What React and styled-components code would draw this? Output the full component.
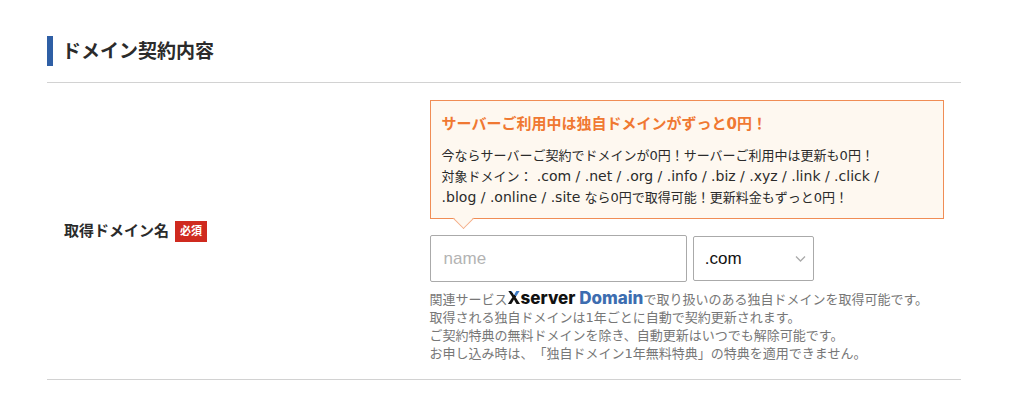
import styled, { createGlobalStyle } from "styled-components";

const GlobalStyle = createGlobalStyle`
    * {
        box-sizing: border-box;
    }

    body {
        margin: 0;
        background: #fff;
        color: #2b2b2b;
        font-family: "DejaVu Sans", "Noto Sans CJK JP", sans-serif;
        text-spacing-trim: space-all;
    }
`;

const Wrapper = styled.main`
    padding: 36px 63px 20px 47px;
`;

const SectionTitle = styled.h2`
    margin: 0 0 16px;
    padding-left: 9px;
    border-left: 6px solid #2f5fa5;
    font-size: 19px;
    font-weight: 700;
    line-height: 30px;
`;

const FormRow = styled.div`
    display: grid;
    grid-template-columns: 40% 1fr;
    align-items: center;
    border-top: 1px solid #d2d2d2;
    border-bottom: 1px solid #d2d2d2;
`;

const LabelCell = styled.div`
    display: flex;
    align-items: center;
    gap: 6px;
    padding: 17px;
`;

const FieldLabel = styled.label`
    font-size: 15px;
    font-weight: 700;
    line-height: 22px;
`;

const Required = styled.span`
    padding: 0 5px;
    background: #cf2a1f;
    color: #fff;
    font-size: 11px;
    font-weight: 700;
    line-height: 21px;
`;

const FieldCell = styled.div`
    padding: 17px 17px 16px;
`;

const Callout = styled.div`
    position: relative;
    margin-bottom: 16px;
    padding: 12px 11px 10px;
    border: 1px solid #f08d55;
    background: #fef8f0;

    &::after {
        content: "";
        position: absolute;
        bottom: -8px;
        left: 25px;
        width: 14px;
        height: 14px;
        border: solid #f4ae87;
        border-width: 0 1px 1px 0;
        background: linear-gradient(135deg, transparent 50%, #fef8f0 50%);
        transform: rotate(45deg);
    }
`;

const CalloutTitle = styled.p`
    margin: 0 0 10px;
    color: #f07832;
    font-size: 15px;
    font-weight: 700;
    line-height: 22px;
`;

const CalloutText = styled.p`
    margin: 0;
    font-size: 13px;
    line-height: 21px;
`;

const TldList = styled.span`
    font-size: 14px;
    line-height: 20px;
`;

const Controls = styled.div`
    display: flex;
    align-items: center;
    gap: 6px;
    margin-bottom: 8px;
`;

const NameInput = styled.input`
    width: 50%;
    height: 47px;
    padding: 0 13px;
    border: 1px solid #aaa;
    border-radius: 2px;
    background: #fff;
    color: #111;
    font-family: "Liberation Sans", sans-serif;
    font-size: 17px;

    &::placeholder {
        color: #b3b3b3;
        opacity: 1;
    }
`;

const SelectBox = styled.div`
    display: grid;
    align-items: center;

    > * {
        grid-area: 1 / 1;
    }

    svg {
        justify-self: end;
        margin-right: 8px;
        pointer-events: none;
    }
`;

const TldSelect = styled.select`
    width: 121px;
    height: 45px;
    padding: 0 11px;
    appearance: none;
    border: 1px solid #aaa;
    border-radius: 2px;
    background: #fff;
    color: #111;
    font-family: "Liberation Sans", sans-serif;
    font-size: 17px;
`;

const Note = styled.p`
    margin: 0;
    color: #777;
    font-size: 13px;
    line-height: 18px;
`;

const Logo = styled.span`
    color: ${(props) => props.$color};
    font-family: Inter, sans-serif;
    font-size: 17px;
    font-weight: 800;
    line-height: 16px;
`;

const LogoMark = styled.span`
    background: linear-gradient(45deg, #111 58%, #3d7cc9 58%);
    background-clip: text;
    color: transparent;
`;

const tldLines = [
    [".com", ".net", ".org", ".info", ".biz", ".xyz", ".link", ".click"],
    [".blog", ".online", ".site"],
];

function Chevron() {
    return (
        <svg width="11" height="8" viewBox="0 0 11 8" fill="none" stroke="#aaa" strokeWidth="1.3" aria-hidden="true">
            <path d="M1 1.5 5.5 6 10 1.5" />
        </svg>
    );
}

function App() {
    return (
        <Wrapper>
            <GlobalStyle />
            <SectionTitle>ドメイン契約内容</SectionTitle>

            <FormRow>
                <LabelCell>
                    <FieldLabel htmlFor="domain-name">取得ドメイン名</FieldLabel>
                    <Required>必須</Required>
                </LabelCell>

                <FieldCell>
                    <Callout>
                        <CalloutTitle>サーバーご利用中は独自ドメインがずっと0円！</CalloutTitle>
                        <CalloutText>今ならサーバーご契約でドメインが0円！サーバーご利用中は更新も0円！</CalloutText>
                        <CalloutText>
                            対象ドメイン： <TldList>{`${tldLines[0].join(" / ")} /`}</TldList>
                        </CalloutText>
                        <CalloutText>
                            <TldList>{tldLines[1].join(" / ")}</TldList> なら0円で取得可能！更新料金もずっと0円！
                        </CalloutText>
                    </Callout>

                    <Controls>
                        <NameInput id="domain-name" type="text" placeholder="name" />
                        <SelectBox>
                            <TldSelect aria-label="ドメインの種類" defaultValue=".com">
                                {tldLines.flat().map((tld) => (
                                    <option key={tld} value={tld}>{tld}</option>
                                ))}
                            </TldSelect>
                            <Chevron />
                        </SelectBox>
                    </Controls>

                    <Note>
                        関連サービス
                        <Logo $color="#111"><LogoMark>X</LogoMark>server </Logo>
                        <Logo $color="#3d6db0">Domain</Logo>
                        で取り扱いのある独自ドメインを取得可能です。
                    </Note>
                    <Note>取得される独自ドメインは1年ごとに自動で契約更新されます。</Note>
                    <Note>ご契約特典の無料ドメインを除き、自動更新はいつでも解除可能です。</Note>
                    <Note>お申し込み時は、「独自ドメイン1年無料特典」の特典を適用できません。</Note>
                </FieldCell>
            </FormRow>
        </Wrapper>
    );
}

export default App;
